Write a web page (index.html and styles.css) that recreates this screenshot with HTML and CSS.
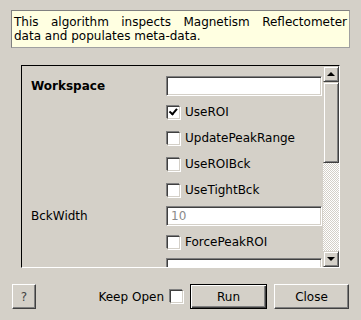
FILE: index.html
```html
<!DOCTYPE html>
<html lang="en">
<head>
    <meta charset="UTF-8">
    <title>LiquidsReflectometryReduction</title>
    <link rel="stylesheet" href="styles.css">
</head>
<body>
    <div class="dialog">
        <p class="desc">
            <span class="desc-line">This algorithm inspects Magnetism Reflectometer</span>
            <span>data and populates meta-data.</span>
        </p>

        <div class="props">
            <div class="props-view">
                <div class="prop-grid">
                    <div class="label bold">Workspace</div>
                    <div class="field"><span class="edit"></span></div>

                    <div class="label"></div>
                    <div class="field"><span class="check checked"></span>UseROI</div>

                    <div class="label"></div>
                    <div class="field"><span class="check"></span>UpdatePeakRange</div>

                    <div class="label"></div>
                    <div class="field"><span class="check"></span>UseROIBck</div>

                    <div class="label"></div>
                    <div class="field"><span class="check"></span>UseTightBck</div>

                    <div class="label">BckWidth</div>
                    <div class="field"><span class="edit placeholder">10</span></div>

                    <div class="label"></div>
                    <div class="field"><span class="check"></span>ForcePeakROI</div>

                    <div class="label"></div>
                    <div class="field"><span class="edit"></span></div>
                </div>
            </div>
            <div class="scrollbar">
                <div class="sb-btn"><span class="arrow up"></span></div>
                <div class="sb-thumb"></div>
                <div class="sb-track"></div>
                <div class="sb-btn"><span class="arrow down"></span></div>
            </div>
        </div>

        <div class="button-bar">
            <button class="btn help">?</button>
            <span class="spacer"></span>
            <span class="keep-open">Keep Open <span class="check"></span></span>
            <button class="btn default">Run</button>
            <button class="btn">Close</button>
        </div>
    </div>
</body>
</html>
```

FILE: styles.css
```css
body {
    margin: 0;
    padding: 0;
    background-color: #d4d0c8;
    font-family: 'DejaVu Sans', Verdana, sans-serif;
    font-size: 12px;
    color: #000;
}
.dialog {
    width: 361px;
    height: 320px;
    display: flex;
    flex-direction: column;
    box-sizing: border-box;
    padding-top: 10px;
}
.desc {
    margin: 0 11px;
    height: 38px;
    box-sizing: border-box;
    padding: 4px 2px 3px 2px;
    line-height: 14px;
    background-color: #ffffe1;
    border: 1px solid #808080;
    border-right-color: #a0a0a0;
    border-bottom-color: #a0a0a0;
}
.desc span {
    display: block;
}
.desc-line {
    text-align: justify;
    text-align-last: justify;
}
.props {
    margin: 17px 21px 0 21px;
    height: 203px;
    box-sizing: border-box;
    display: flex;
    border: 1px solid #000;
    border-right-color: #fff;
    border-bottom-color: #fff;
}
.props-view {
    flex: 1;
    overflow: hidden;
}
.prop-grid {
    display: grid;
    grid-template-columns: 144px 1fr;
    grid-auto-rows: 26px;
    padding: 7px 1px 0 0;
}
.label {
    display: flex;
    align-items: center;
    padding-left: 9px;
}
.bold {
    font-weight: bold;
}
.field {
    display: flex;
    align-items: center;
    gap: 5px;
}
.edit {
    flex: 1;
    height: 20px;
    box-sizing: border-box;
    background-color: #fff;
    border: 1px solid #808080;
    border-right-color: #fff;
    border-bottom-color: #fff;
    box-shadow: inset 1px 1px #404040, inset -1px -1px #d4d0c8;
    padding: 1px 4px;
    line-height: 16px;
}
.placeholder {
    color: #8a8a8a;
}
.check {
    display: inline-block;
    width: 13px;
    height: 13px;
    box-sizing: border-box;
    background-color: #fff;
    border: 1px solid #404040;
    border-right-color: #d4d0c8;
    border-bottom-color: #d4d0c8;
    box-shadow: -1px -1px #808080, 1px 1px #fff;
    margin-left: 1px;
    position: relative;
}
.check.checked::after {
    content: '';
    position: absolute;
    left: 2px;
    top: 0px;
    width: 6px;
    height: 3px;
    border-left: 2px solid #000;
    border-bottom: 2px solid #000;
    transform: translate(0, 2px) rotate(-50deg);
    transform-origin: 3px 3px;
}
.scrollbar {
    width: 16px;
    display: flex;
    flex-direction: column;
}
.sb-btn,
.sb-thumb {
    box-sizing: border-box;
    background-color: #d4d0c8;
    border: 1px solid #d4d0c8;
    border-right-color: #404040;
    border-bottom-color: #404040;
    box-shadow: inset 1px 1px #fff, inset -1px -1px #808080;
}
.sb-btn {
    height: 16px;
    display: flex;
    align-items: center;
    justify-content: center;
}
.sb-thumb {
    height: 81px;
}
.sb-track {
    flex: 1;
    background: repeating-conic-gradient(#fff 0 25%, #d4d0c8 0 50%) 0 0 / 2px 2px;
}
.arrow {
    width: 0;
    height: 0;
    border-left: 4px solid transparent;
    border-right: 4px solid transparent;
}
.arrow.up {
    border-bottom: 4px solid #000;
}
.arrow.down {
    border-top: 4px solid #000;
}
.button-bar {
    display: flex;
    align-items: center;
    margin: 16px 12px 0 12px;
    gap: 7px;
}
.spacer {
    flex: 1;
}
.keep-open {
    display: flex;
    align-items: center;
    gap: 5px;
}
.btn {
    height: 25px;
    box-sizing: border-box;
    font-family: 'DejaVu Sans', Verdana, sans-serif;
    font-size: 12px;
    color: #000;
    background-color: #d4d0c8;
    border: 1px solid #fff;
    border-right-color: #404040;
    border-bottom-color: #404040;
    box-shadow: inset -1px -1px #808080;
    padding: 0;
}
.btn.help {
    width: 24px;
    color: #444;
}
.btn.default {
    width: 77px;
    border: 1px solid #000;
    box-shadow: inset 1px 1px #fff, inset -1px -1px #404040, inset -2px -2px #808080;
}
.btn:last-child {
    width: 75px;
}
```
